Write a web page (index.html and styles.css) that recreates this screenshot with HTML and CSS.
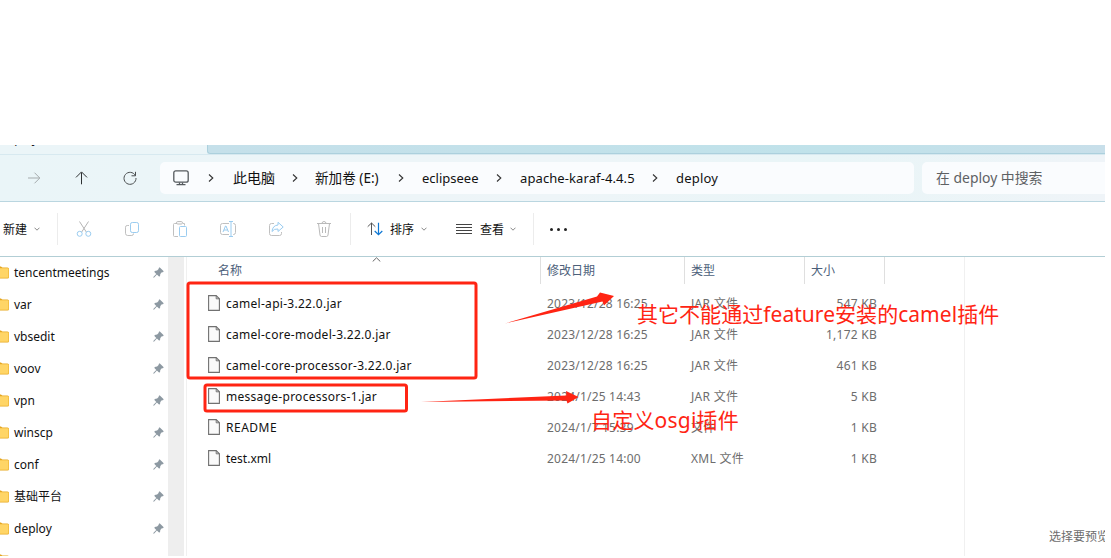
FILE: index.html
```html
<!DOCTYPE html>
<html lang="zh-CN">
<head>
<meta charset="utf-8">
<title>deploy</title>
<link rel="stylesheet" href="styles.css">
</head>
<body>
<svg class="defs" width="0" height="0">
  <symbol id="folder" viewBox="0 0 9 13">
    <path d="M0 .5h1l1.500 1.500H0z" fill="#e2a11b"/>
    <path d="M0 1.500h7.500q1.500 0 1.500 1.500v8q0 1.500-1.500 1.500H0z" fill="#e8a921"/>
    <path d="M0 2.300h7.500q1 0 1 1v7.500q0 .9-1 .9H0z" fill="#ffd566"/>
  </symbol>
  <symbol id="pin" viewBox="0 0 11 11">
    <path d="M6.600.3 10.700 4.300 10 5.200 8.800 5.300 7.300 6.900 7 9.300 6 9.500 3.900 7.500 1.200 10.400.3 10.700.5 9.800 3.300 7 1.400 5 1.700 4 4.100 3.600 5.600 2.100 5.800 1z" fill="#8d99a2"/>
  </symbol>
  <symbol id="file" viewBox="0 0 12 16">
    <path d="M.6.6h7.600l3.200 3.200v11.600H.6z" fill="#fafafa" stroke="#717171" stroke-width="1.100"/>
    <path d="M8.200.6v3.200h3.200" fill="none" stroke="#717171"/>
  </symbol>
  <symbol id="next" viewBox="0 0 6 8"><path d="M1 .5 4.800 4 1 7.500" fill="none" stroke="#333" stroke-width="1.100"/></symbol>
  <symbol id="down" viewBox="0 0 6 4"><path d="M.5.7 3 3.200 5.500.7" fill="none" stroke="#888"/></symbol>
</svg>

<div class="window">
  <div class="tabs"><div class="tab">deploy</div><div class="strip"></div></div>

  <div class="nav">
    <svg class="i-fwd" width="14" height="14" viewBox="0 0 14 14"><path d="M1 7h11.500M7.500 1.700 12.800 7l-5.300 5.300" stroke="#a5abad"/></svg>
    <svg class="i-up" width="14" height="14" viewBox="0 0 14 14"><path d="M6.500 13.300V1.500M1 6.400 6.500.9 12 6.400" stroke="#2d3032"/></svg>
    <svg class="i-ref" width="14" height="14" viewBox="0 0 14 14"><path d="M12.300 4.500A6 6 0 1 0 13 7M12.500.8v4h-4" stroke="#4a4e50"/></svg>
    <div class="address">
      <svg class="pc" width="16" height="16" viewBox="0 0 16 16"><rect x=".8" y=".8" width="14.400" height="11.400" rx="2" stroke="#555a5e" stroke-width="1.300"/><path d="M3.500 14.700h9M6.500 12.500v2M9.500 12.500v2" stroke="#555a5e" stroke-width="1.300"/></svg>
      <svg class="sep first" width="6" height="8"><use href="#next"/></svg>
      <span class="crumb c1">此电脑</span>
      <svg class="sep second" width="6" height="8"><use href="#next"/></svg>
      <span class="crumb c2">新加卷 (E:)</span>
      <svg class="sep" width="6" height="8"><use href="#next"/></svg>
      <span class="crumb c3">eclipseee</span>
      <svg class="sep" width="6" height="8"><use href="#next"/></svg>
      <span class="crumb c4">apache-karaf-4.4.5</span>
      <svg class="sep" width="6" height="8"><use href="#next"/></svg>
      <span class="crumb c5">deploy</span>
    </div>
    <div class="search">在 deploy 中搜索</div>
  </div>

  <div class="tools">
    <div class="new"><span>新建</span><svg width="6" height="4"><use href="#down"/></svg></div>
    <div class="actions">
      <svg width="16" height="16" viewBox="0 0 16 16"><path d="M3.500.5 10.300 11M12.500.5 5.700 11" stroke="#b5b5b5"/><circle cx="3.700" cy="12.800" r="2.500" stroke="#9accf0"/><circle cx="12.300" cy="12.800" r="2.500" stroke="#9accf0"/></svg>
      <svg width="16" height="16" viewBox="0 0 16 16"><path d="M5 4.500H3.200q-1.700 0-1.700 1.700v6.100Q1.500 14.500 3.700 14.500h4.100q1.700 0 1.700-2" stroke="#c0c0c0"/><rect x="6.500" y="1.500" width="8" height="10" rx="1.800" stroke="#9accf0"/></svg>
      <svg width="16" height="16" viewBox="0 0 16 16"><path d="M5 2.500H2.500q-1 0-1 1v11q0 1 1 1H6M11 2.500h1.500v2" stroke="#c0c0c0"/><rect x="4.500" y=".6" width="6" height="2.400" rx="1.200" stroke="#b8b8b8"/><rect x="7.500" y="5.500" width="7" height="10" rx="1" stroke="#9accf0"/></svg>
      <svg width="16" height="16" viewBox="0 0 16 16"><path d="M9 2.500H2.500Q.5 2.500.5 4.500v7q0 2 2 2H9M13 2.500h.5q2 0 2 2v7q0 2-2 2H13" stroke="#c0c0c0"/><path d="M3 11 5.500 5h.5l2.500 6M4 9h3.500M11 .5v15M9 .5h4M9 15.500h4" stroke="#9accf0"/></svg>
      <svg width="16" height="16" viewBox="0 0 16 16"><path d="M6 2.500H3.500q-2 0-2 2v8q0 2 2 2h8q2 0 2-2V11" stroke="#c0c0c0"/><path d="M10 1.300 15.200 6 10 10.500V8Q6 7.500 4 10.500 4.500 4.500 10 4z" stroke="#9accf0"/></svg>
      <svg width="16" height="16" viewBox="0 0 16 16"><path d="M1 2.500h14M2.500 2.500 4 14q.2 1.500 1.500 1.500h5Q11.800 15.500 12 14l1.500-11.500M6 2.500Q6 .5 8 .5t2 2M6.500 6v6M9.500 6v6" stroke="#bababa"/></svg>
    </div>
    <div class="sort">
      <svg width="16" height="14" viewBox="0 0 16 14"><path d="M4.500 13V1M.7 4.700 4.500 1l3.800 3.700" stroke="#555"/><path d="M11.500.7v12M7.700 9l3.800 3.700L15.300 9" stroke="#0f78d4" stroke-width="1.200"/></svg>
      <span>排序</span><svg width="6" height="4"><use href="#down"/></svg>
    </div>
    <div class="view">
      <svg width="16" height="12" viewBox="0 0 16 12"><path d="M0 1.500h16M0 4.500h16M0 7.500h16M0 10.500h16" stroke="#444"/></svg>
      <span>查看</span><svg width="6" height="4"><use href="#down"/></svg>
    </div>
    <div class="more"><i></i><i></i><i></i></div>
  </div>

  <div class="body">
    <div class="side">
      <div class="pinrow"><svg width="9" height="13"><use href="#folder"/></svg><span>tencentmeetings</span><svg width="11" height="11"><use href="#pin"/></svg></div>
      <div class="pinrow"><svg width="9" height="13"><use href="#folder"/></svg><span>var</span><svg width="11" height="11"><use href="#pin"/></svg></div>
      <div class="pinrow"><svg width="9" height="13"><use href="#folder"/></svg><span>vbsedit</span><svg width="11" height="11"><use href="#pin"/></svg></div>
      <div class="pinrow"><svg width="9" height="13"><use href="#folder"/></svg><span>voov</span><svg width="11" height="11"><use href="#pin"/></svg></div>
      <div class="pinrow"><svg width="9" height="13"><use href="#folder"/></svg><span>vpn</span><svg width="11" height="11"><use href="#pin"/></svg></div>
      <div class="pinrow"><svg width="9" height="13"><use href="#folder"/></svg><span>winscp</span><svg width="11" height="11"><use href="#pin"/></svg></div>
      <div class="pinrow"><svg width="9" height="13"><use href="#folder"/></svg><span>conf</span><svg width="11" height="11"><use href="#pin"/></svg></div>
      <div class="pinrow"><svg width="9" height="13"><use href="#folder"/></svg><span>基础平台</span><svg width="11" height="11"><use href="#pin"/></svg></div>
      <div class="pinrow"><svg width="9" height="13"><use href="#folder"/></svg><span>deploy</span><svg width="11" height="11"><use href="#pin"/></svg></div>
      <div class="pinrow"><svg width="9" height="13"><use href="#folder"/></svg></div>
    </div>
    <div class="gutter"></div>
    <div class="files">
      <div class="head">
        <div class="h-name">名称<svg class="up" width="9" height="5" viewBox="0 0 9 5"><path d="M.7 4.500 4.500.8l3.800 3.700" stroke="#666"/></svg></div>
        <div>修改日期</div><div class="h-type">类型</div><div class="h-size">大小</div>
      </div>
      <div class="row"><svg width="12" height="16"><use href="#file"/></svg><span class="name">camel-api-3.22.0.jar</span><span class="date">2023/12/28 16:25</span><span class="type">JAR 文件</span><span class="size">547 KB</span></div>
      <div class="row"><svg width="12" height="16"><use href="#file"/></svg><span class="name">camel-core-model-3.22.0.jar</span><span class="date">2023/12/28 16:25</span><span class="type">JAR 文件</span><span class="size">1,172 KB</span></div>
      <div class="row"><svg width="12" height="16"><use href="#file"/></svg><span class="name">camel-core-processor-3.22.0.jar</span><span class="date">2023/12/28 16:25</span><span class="type">JAR 文件</span><span class="size">461 KB</span></div>
      <div class="row"><svg width="12" height="16"><use href="#file"/></svg><span class="name">message-processors-1.jar</span><span class="date">2024/1/25 14:43</span><span class="type">JAR 文件</span><span class="size">5 KB</span></div>
      <div class="row"><svg width="12" height="16"><use href="#file"/></svg><span class="name caps">README</span><span class="date">2024/1/7 15:39</span><span class="type">文件</span><span class="size">1 KB</span></div>
      <div class="row"><svg width="12" height="16"><use href="#file"/></svg><span class="name plain">test.xml</span><span class="date">2024/1/25 14:00</span><span class="type">XML 文件</span><span class="size">1 KB</span></div>
    </div>
    <div class="preview">选择要预览的文件。</div>
  </div>
</div>

<svg class="marks" width="1111" height="558" viewBox="0 0 1111 558">
  <rect x="188" y="283" width="288" height="95" rx="2"/>
  <rect x="205" y="385" width="201.500" height="26" rx="2"/>
  <path d="M505 323.500 597 296.500 600 292.500 614 296 604 305.500 602.500 301.500z"/>
  <path d="M421 402 566.500 395.500 566 391 578.500 397 567.500 403.500 566.500 400.500z"/>
</svg>
<div class="note n1">其它不能通过<span>feature</span>安装的<span>camel</span>插件</div>
<div class="note n2">自定义<span>osgi</span>插件</div>
</body>
</html>
```
FILE: styles.css
```css
* { box-sizing: border-box; }
body {
  margin: 0;
  padding-top: 145px;
  width: 1111px;
  height: 558px;
  overflow: hidden;
  background: #fff;
  color: #111;
  font: 12px "Noto Sans", "Noto Sans CJK SC", sans-serif;
}
svg { display: block; flex: none; fill: none; }
span { white-space: nowrap; }
.defs { position: absolute; }

.window { width: 1105px; height: 411px; overflow: hidden; display: flex; flex-direction: column; }

.tabs { height: 9px; display: flex; background: #ebf5f8; }
.tab { width: 207px; height: 9px; overflow: hidden; line-height: 18px; text-indent: 1px; }
.tab::before { content: ""; display: block; margin-top: -15px; }
.strip {
  flex: 1;
  background: linear-gradient(90deg, #c5e0ea, #c0e2ea 70%, #c8dfea);
  border-bottom: 1px solid #acd0dd;
  border-left: 1px solid #acd0dd;
  border-radius: 0 0 0 3px;
}

.nav {
  height: 48px;
  display: flex;
  align-items: center;
  background: linear-gradient(90deg, #eaf5f8, #eef5f8 50%, #e9f5f7 75%, #eff4f8);
  border-top: 1px solid #d7e9f0;
  border-bottom: 1px solid #bad6e0;
  font-size: 13px;
}
.i-fwd { margin-left: 27px; }
.i-up { margin-left: 34px; }
.i-ref { margin-left: 34px; }
.address {
  width: 754px;
  height: 32px;
  margin-left: 23px;
  padding-left: 13px;
  display: flex;
  align-items: center;
  background: #fafcfe;
  border-radius: 5px;
}
.sep { margin-right: 18px; }
.sep.first { margin-right: 19px; }
.sep.second { margin-right: 17px; }
.pc { margin-right: 19px; }
.crumb { flex: none; line-height: 18px; }
.c1 { width: 59px; font-size: 14px; margin-top: -1px; }
.c2 { width: 83px; font-size: 13.6px; margin-top: -1px; }
.c3 { width: 74px; }
.c4 { width: 132px; letter-spacing: .1px; }
.c5 { letter-spacing: .2px; }
.search {
  flex: 1;
  height: 32px;
  margin-left: 8px;
  padding-left: 14px;
  line-height: 31px;
  background: #fafcfe;
  border-radius: 5px 0 0 5px;
  font-size: 13.9px;
  color: #5e6164;
}

.tools { height: 55px; display: flex; align-items: center; border-bottom: 1px solid #b2ced5; }
.tools > div { display: flex; align-items: center; height: 32px; }
.new { width: 58px; padding-left: 3px; gap: 7px; border-right: 1px solid #ececec; }
.actions { width: 293px; padding-left: 18px; gap: 32px; border-right: 1px solid #ececec; }
.sort { padding-left: 16px; width: 105px; }
.view { width: 78px; border-right: 1px solid #ececec; }
.sort span { margin: 0 7px; }
.view span { margin: 0 6px 0 8px; }
.more { padding-left: 16px; gap: 4px; }
.more i { width: 3px; height: 3px; border-radius: 50%; background: #222; }

.body { flex: 1; min-height: 0; display: flex; }
.side { width: 168px; overflow: hidden; }
.side .pinrow:first-child { margin-top: -1px; }
.pinrow { height: 32px; display: flex; align-items: center; gap: 5px; }
.pinrow span { flex: 1; }
.pinrow svg:last-child:not(:first-child) { margin-right: 4px; margin-top: 1px; }
.gutter { width: 16px; margin-right: 2px; background: #eee; }
.files { width: 779px; border-left: 1px solid #f0f0f0; border-right: 1px solid #f0f0f0; }
.head { display: flex; height: 27px; margin-bottom: 3px; line-height: 27px; color: #4c607a; }
.head > div { width: 144px; padding-left: 6px; border-left: 1px solid #dfdfdf; }
.head .h-name { width: 353px; padding-left: 31px; border: 0; display: flex; }
.head .h-type { width: 120px; }
.head .h-size { width: 81px; border-right: 1px solid #dfdfdf; }
.up { margin-left: 130px; }
.row { height: 31px; display: flex; align-items: center; padding-left: 21px; color: #6d6d6d; }
.row span { line-height: 17px; padding-top: 1px; }
.row .name { width: 327px; padding-left: 6px; color: #111; letter-spacing: .28px; }
.row .plain { letter-spacing: 0; }
.row .caps { letter-spacing: .5px; }
.date { width: 144px; letter-spacing: .2px; }
.row .type { width: 106px; letter-spacing: .3px; padding-top: 2px; }
.size { width: 80px; text-align: right; letter-spacing: .25px; }
.preview { flex: 1; padding: 271px 0 0 84px; white-space: nowrap; overflow: hidden; line-height: 18px; color: #6d6d6d; }

.marks { position: absolute; left: 0; top: 0; }
.marks rect { stroke: #ff2413; stroke-width: 3; }
.marks path { fill: #ff2413; }
.note { position: absolute; white-space: nowrap; font-size: 21px; line-height: 28px; color: #ff2413; }
.n1 { left: 637px; top: 300px; letter-spacing: .04px; }
.n2 { left: 591px; top: 406px; letter-spacing: .2px; }
```
